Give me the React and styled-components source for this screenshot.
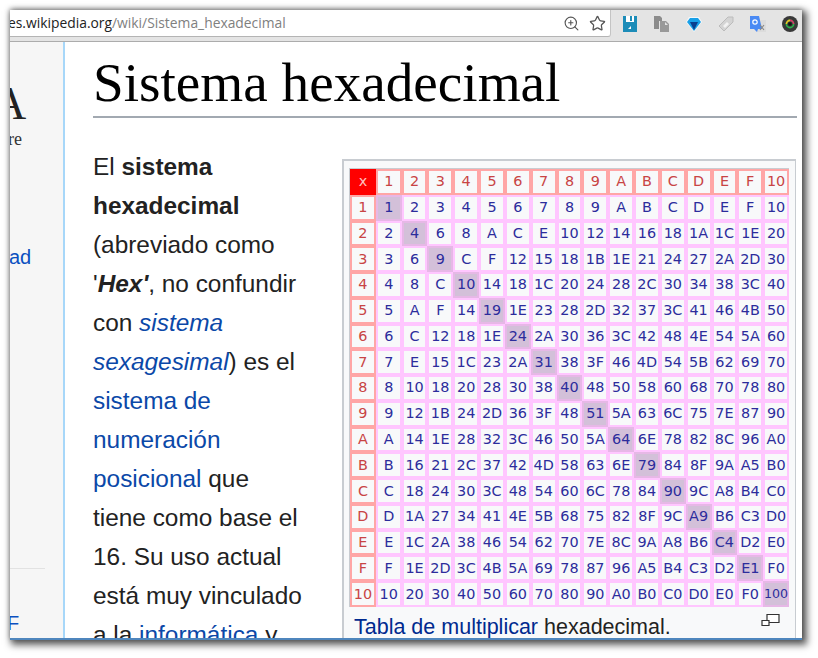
import React from 'react';
import styled, { createGlobalStyle } from 'styled-components';
import { ZoomIn, Star } from 'lucide-react';

const GlobalStyle = createGlobalStyle`
  html, body {
    margin: 0;
    background: #fff;
  }
  #root {
    width: 818px;
    height: 658px;
    padding: 10px 16px 18px 10px;
    box-sizing: border-box;
  }
`;

const Window = styled.div`
  width: 792px;
  height: 630px;
  display: flex;
  flex-direction: column;
  overflow: hidden;
  background: #fff;
  border-bottom: 2px solid #4f86bd;
  box-sizing: border-box;
  box-shadow: 3px 3px 7px 2px rgba(0, 0, 0, 0.62), 0 -1px 5px rgba(0, 0, 0, 0.35);
`;

const Toolbar = styled.header`
  height: 32px;
  flex: none;
  display: flex;
  align-items: flex-start;
  background: #e4e4e4;
  border-bottom: 1px solid #acacac;
  box-sizing: border-box;
`;

const UrlBox = styled.div`
  width: 601px;
  height: 27px;
  flex: none;
  display: flex;
  align-items: center;
  background: #fff;
  border-right: 1px solid #c4c4c4;
  border-bottom: 1px solid #b4b4b4;
  border-bottom-right-radius: 3px;
  box-sizing: border-box;
  overflow: hidden;
`;

const UrlText = styled.div`
  flex: 1;
  font: 13.85px "Open Sans", sans-serif;
  color: #808080;
  white-space: nowrap;
  margin: -1px 0 0 -2px;
  b {
    font-weight: 400;
    color: #222;
  }
`;

const UrlAction = styled.span`
  display: flex;
  color: #555;
  margin-right: ${p => p.$gap}px;
`;

const Extensions = styled.div`
  flex: 1;
  height: 27px;
  display: flex;
  align-items: center;
  padding-left: 11px;
  gap: 16px;
`;

const Main = styled.div`
  flex: 1;
  min-height: 0;
  display: flex;
`;

const Sidebar = styled.nav`
  width: 55px;
  flex: none;
  background: #f6f6f6;
  border-right: 2px solid #a7d7f9;
  box-sizing: border-box;
  overflow: hidden;
  display: flex;
  flex-direction: column;
`;

const LogoLetter = styled.div`
  font: 46px/46px "Liberation Serif", serif;
  color: #222;
  margin: 39px 0 0 -17px;
`;

const LogoTag = styled.div`
  font: 18px/20px "Liberation Serif", serif;
  color: #333;
  margin: 2px 0 0 -2px;
`;

const SideLink = styled.a`
  font: 20px/24px "Liberation Sans", sans-serif;
  color: #0b50c0;
  margin: ${p => p.$top}px 0 0 ${p => p.$left}px;
`;

const SideRule = styled.div`
  height: 1px;
  width: 35px;
  background: #e2e2e2;
  margin-top: 299px;
`;

const Content = styled.main`
  flex: 1;
  min-width: 0;
  padding: 0 5px 0 28px;
  overflow: hidden;
`;

const Title = styled.h1`
  margin: 0;
  height: 74px;
  font: 400 55.2px/82px "Liberation Serif", serif;
  color: #000;
  border-bottom: 2px solid #a2a9b1;
`;

const Body = styled.div`
  display: flex;
  align-items: flex-start;
  margin-top: 29px;
`;

const Para = styled.p`
  margin: 0;
  width: 212px;
  flex: none;
  font: 24.4px/39px "Liberation Sans", sans-serif;
  color: #222;
`;

const WikiLink = styled.a`
  color: #0b48a8;
`;

const Figure = styled.figure`
  margin: 12px 0 0 37px;
  width: 454px;
  flex: none;
  padding: 7px 6px 0 5px;
  box-sizing: border-box;
  background: #f8f9fa;
  border: 2px solid #c8ccd1;
  border-width: 2px 1px 1px 2px;
`;

const Grid = styled.div`
  display: grid;
  grid-template-columns: repeat(17, 1fr);
  width: 440px;
  height: 439px;
  grid-auto-rows: 1fr;
  background: #c8ccd1;
  padding: 1px 0 0 1px;
  box-sizing: border-box;
`;

const Cell = styled.div`
  display: flex;
  align-items: center;
  justify-content: center;
  min-width: 0;
  padding-bottom: 1px;
  box-sizing: border-box;
  font: ${p => (p.$wide ? 12.6 : 14.4)}px "DejaVu Sans", sans-serif;
  white-space: nowrap;
  color: ${p => (p.$head ? '#c84444' : '#2c2c9c')};
  background: ${p => (p.$diag ? '#d3c0d9' : '#f8f9fa')};
  border: 2px solid ${p => (p.$head ? '#ffa6a6' : p.$diag ? '#e6b8e6' : '#ffc6ff')};
`;

const CornerCell = styled(Cell)`
  background: #ff0000;
  color: #ffc0c0;
  border-color: #ff0000;
`;

const Caption = styled.figcaption`
  display: flex;
  justify-content: space-between;
  padding: 6px 9px 0 5px;
  font: 21.5px/28px "Liberation Sans", sans-serif;
  color: #222;
  a {
    color: #002a8f;
  }
`;

const Save = () => (
  <svg width="16" height="16" viewBox="0 0 16 16">
    <path d="M1 0h14v16H1z" fill="#1c8cb8" />
    <path d="M4 0h8v6H4z" fill="#fff" />
    <path d="M8 0h2v5H8z" fill="#1c8cb8" />
    <path d="M6 13l3-3v3z" fill="#fff" />
  </svg>
);

const Files = () => (
  <svg width="16" height="16" viewBox="0 0 16 16">
    <path d="M0 0h6l2 2v3H5v8H0z" fill="#8c8c8c" />
    <path d="M6 5h6l3 3v8H6z" fill="#999" />
    <path d="M11 6v3h3z" fill="#e4e4e4" />
  </svg>
);

const Diamond = () => (
  <svg width="16" height="16" viewBox="0 0 16 16">
    <path d="M3 1h10l3 5-8 10L0 6z" fill="#f4f8fb" />
    <path d="M4 2h8l3 4-7 9-7-9z" fill="#18a0e8" />
    <path d="M4 6h8l-4 8z" fill="#0a3f8f" />
  </svg>
);

const Tag = () => (
  <svg width="16" height="16" viewBox="0 0 16 16">
    <path d="M1 10l9-9 5 0 0 5-9 9z" fill="#d4d4d4" stroke="#bcbcbc" />
    <path d="M5 10l4-4 2 2-4 4z" fill="#f2f2f2" />
  </svg>
);

const Translate = () => (
  <svg width="16" height="16" viewBox="0 0 16 16">
    <path d="M7 4h9v12H7z" fill="#dcdcdc" />
    <path d="M0 0h9l3 13H8l-1 3-3-3H0z" fill="#4a8af4" />
    <circle cx="5" cy="6" r="2.2" fill="none" stroke="#fff" strokeWidth="1.2" />
    <path d="M10 9l4 5M14 9l-4 5" stroke="#888" strokeWidth="1.1" />
  </svg>
);

const Lens = () => (
  <svg width="16" height="16" viewBox="0 0 16 16">
    <circle cx="8" cy="8" r="8" fill="#383838" />
    <circle cx="8" cy="8" r="3.6" fill="none" stroke="#2ab34a" strokeWidth="1.6" />
    <path d="M8 4.4a3.6 3.6 0 0 1 3.6 3.6" fill="none" stroke="#e0306a" strokeWidth="1.6" />
    <path d="M4.4 8a3.6 3.6 0 0 1 3.6-3.6" fill="none" stroke="#f0c020" strokeWidth="1.6" />
    <circle cx="8" cy="8" r="1.8" fill="#111" />
  </svg>
);

const Magnify = () => (
  <svg width="19" height="14" viewBox="0 0 19 14">
    <path d="M6 1.5h12v8H6z" fill="#fff" stroke="#333" strokeWidth="1.2" />
    <path d="M1 7.5h7v5H1z" fill="#fff" stroke="#333" strokeWidth="1.2" />
  </svg>
);

const hex = n => n.toString(16).toUpperCase();

const indexes = Array.from({ length: 16 }, (_, i) => i + 1);

export default function App() {
  return (
    <>
      <GlobalStyle />
      <Window>
        <Toolbar>
          <UrlBox>
            <UrlText><b>es.wikipedia.org</b>/wiki/Sistema_hexadecimal</UrlText>
            <UrlAction $gap={9}><ZoomIn size={17} strokeWidth={1.6} /></UrlAction>
            <UrlAction $gap={4}><Star size={17} strokeWidth={1.8} /></UrlAction>
          </UrlBox>
          <Extensions>
            <Save />
            <Files />
            <Diamond />
            <Tag />
            <Translate />
            <Lens />
          </Extensions>
        </Toolbar>
        <Main>
          <Sidebar>
            <LogoLetter>A</LogoLetter>
            <LogoTag>re</LogoTag>
            <SideLink $top={96} $left={-1}>ad</SideLink>
            <SideRule />
            <SideLink $top={42} $left={-3}>F</SideLink>
          </Sidebar>
          <Content>
            <Title>Sistema hexadecimal</Title>
            <Body>
              <Para>
                El <b>sistema hexadecimal</b> (abreviado como '<b><i>Hex'</i></b>, no confundir con <WikiLink><i>sistema sexagesimal</i></WikiLink>) es el <WikiLink>sistema de numeración posicional</WikiLink> que tiene como base el 16. Su uso actual está muy vinculado a la <WikiLink>informática</WikiLink> y
              </Para>
              <Figure>
                <Grid>
                  <CornerCell $head>x</CornerCell>
                  {indexes.map(c => <Cell key={c} $head>{hex(c)}</Cell>)}
                  {indexes.map(r => (
                    <React.Fragment key={r}>
                      <Cell $head>{hex(r)}</Cell>
                      {indexes.map(c => (
                        <Cell key={c} $diag={r === c} $wide={r * c >= 256}>{hex(r * c)}</Cell>
                      ))}
                    </React.Fragment>
                  ))}
                </Grid>
                <Caption>
                  <span><a>Tabla de multiplicar</a> hexadecimal.</span>
                  <Magnify />
                </Caption>
              </Figure>
            </Body>
          </Content>
        </Main>
      </Window>
    </>
  );
}
